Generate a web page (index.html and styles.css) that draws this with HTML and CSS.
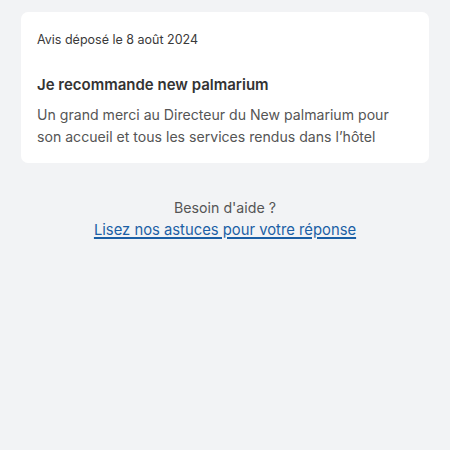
FILE: index.html
```html
<!DOCTYPE html>
<html lang="fr">
<head>
<meta charset="utf-8">
<link rel="stylesheet" href="styles.css">
</head>
<body>
<div class="page">
  <div class="card">
    <div class="date">Avis déposé le 8 août 2024</div>
    <div class="title">Je recommande new palmarium</div>
    <div class="body">Un grand merci au Directeur du New palmarium pour son accueil et tous les services rendus dans l’hôtel</div>
  </div>
  <div class="help">
    <div class="help-q">Besoin d'aide ?</div>
    <a class="help-link" href="#">Lisez nos astuces pour votre réponse</a>
  </div>
</div>
</body>
</html>
```
FILE: styles.css
```css
html, body {
  margin: 0;
  padding: 0;
  background: #f2f3f5;
  height: 100%;
}
body {
  font-family: Inter, "Noto Sans", sans-serif;
  color: #333;
}
.page {
  padding: 12px 21px;
}
.card {
  background: #fff;
  border-radius: 7px;
  padding: 20px 16px 15px 16px;
}
.date {
  font-size: 12.5px;
  line-height: 16px;
  color: #3a3a3a;
}
.title {
  margin-top: 27px;
  font-size: 15px;
  font-weight: 600;
  line-height: 20px;
  color: #333;
}
.body {
  margin-top: 9px;
  font-size: 14.1px;
  line-height: 22px;
  color: #555;
}
.help {
  margin-top: 34px;
  text-align: center;
}
.help-q {
  font-size: 14.2px;
  line-height: 22px;
  color: #555;
}
.help-link {
  font-size: 14.8px;
  line-height: 22px;
  color: #1b5fa5;
  text-decoration: underline;
  text-decoration-thickness: 1.5px;
  text-underline-offset: 2px;
}
```
